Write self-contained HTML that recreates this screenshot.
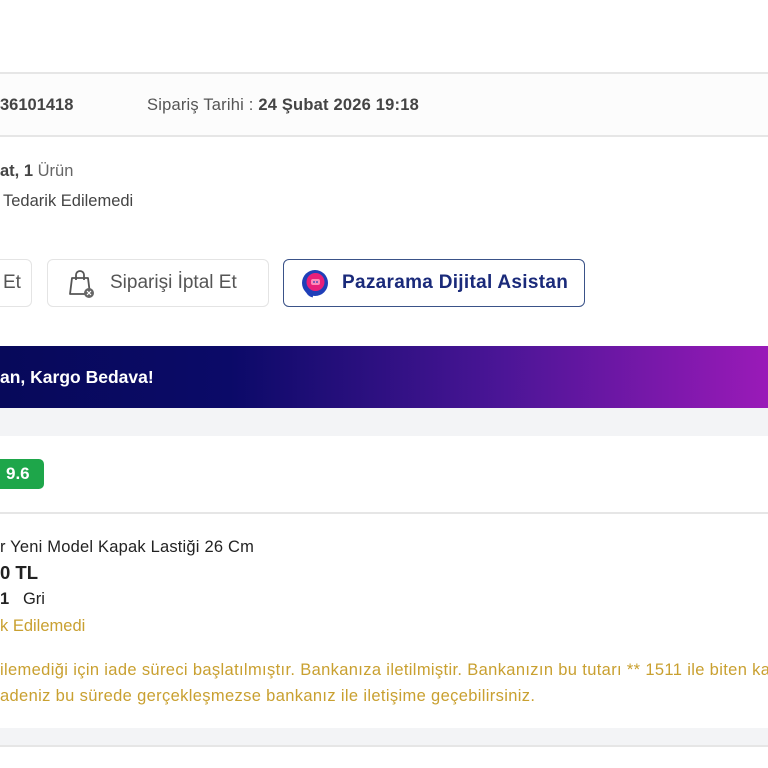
<!DOCTYPE html>
<html><head><meta charset="utf-8"><style>
*{margin:0;padding:0;box-sizing:border-box}
body{width:768px;height:768px;overflow:hidden;background:#fff;font-family:"Liberation Sans","DejaVu Sans",sans-serif;color:#333;position:relative}
.a{position:absolute;white-space:nowrap}
.line{position:absolute;left:0;width:768px;height:2px;background:#e6e6e6}
.btn{position:absolute;top:259px;height:48px;border:1px solid #e4e4e4;border-radius:6px;background:#fff;font-size:19px;color:#555;display:flex;align-items:center}
</style></head><body>
<div class="line" style="top:72px"></div>
<div class="a" style="left:0;top:74px;width:768px;height:61px;background:#fcfcfc"></div>
<div class="a" style="left:0;top:96px;font-size:16.5px;color:#444;font-weight:bold">36101418</div>
<div class="a" style="left:147px;top:96px;font-size:16.5px;color:#555;letter-spacing:0.2px">Sipariş Tarihi : <b style="color:#444">24 Şubat 2026 19:18</b></div>
<div class="line" style="top:135px"></div>
<div class="a" style="left:0;top:162px;font-size:16.5px;color:#666"><b style="color:#444">at, 1</b> Ürün</div>
<div class="a" style="left:3px;top:192px;font-size:16.5px;color:#444">Tedarik Edilemedi</div>
<div class="btn" style="left:-20px;width:52px;padding-left:22px">Et</div>
<div class="btn" style="left:47px;width:222px;padding-left:18px">
<svg width="30" height="30" viewBox="0 0 30 30" style="margin-right:14px"><path d="M4 26 L6 10 H22 L24 26 Z" fill="none" stroke="#555" stroke-width="1.8" stroke-linejoin="round"/><path d="M10 12 V7 a4 4 0 0 1 8 0 V12" fill="none" stroke="#555" stroke-width="1.8"/><circle cx="23" cy="25" r="5" fill="#666"/><path d="M21 23 l4 4 M25 23 l-4 4" stroke="#fff" stroke-width="1.2"/></svg>Siparişi İptal Et</div>
<div class="btn" style="left:283px;width:302px;border:1.5px solid #3a5288;padding-left:16px;color:#1a2a7a;font-weight:bold;letter-spacing:0.3px">
<svg width="30" height="30" viewBox="0 0 30 30" style="margin-right:12px"><circle cx="15" cy="15" r="13" fill="#1f3fb8"/><circle cx="15.5" cy="14" r="9" fill="#e8207a"/><path d="M7 22 Q8 27 13 28" stroke="#1f3fb8" stroke-width="3" fill="none"/><rect x="11" y="11" width="9" height="6" rx="2" fill="#ff8ab8"/><circle cx="14" cy="14" r="0.9" fill="#1f3fb8"/><circle cx="17" cy="14" r="0.9" fill="#1f3fb8"/></svg>Pazarama Dijital Asistan</div>
<div class="a" style="left:0;top:346px;width:768px;height:62px;background:linear-gradient(90deg,#07095a 0%,#0b0a68 30%,#4a1596 65%,#9a1ab8 100%)"></div>
<div class="a" style="left:0;top:367px;font-size:17.5px;color:#fff;font-weight:bold">an, Kargo Bedava!</div>
<div class="a" style="left:0;top:408px;width:768px;height:28px;background:#f3f4f6"></div>
<div class="a" style="left:-10px;top:459px;width:54px;height:30px;background:#1ea64a;border-radius:5px;color:#fff;font-weight:bold;font-size:17px;padding:5px 0 0 16px">9.6</div>
<div class="line" style="top:512px"></div>
<div class="a" style="left:0;top:538px;font-size:16.5px;color:#222;letter-spacing:0.2px">r Yeni Model Kapak Lastiği 26 Cm</div>
<div class="a" style="left:0;top:562px;font-size:18.5px;color:#222;font-weight:bold">0 TL</div>
<div class="a" style="left:0;top:590px;font-size:16.5px;color:#222"><b>1</b>&nbsp;&nbsp;&nbsp;Gri</div>
<div class="a" style="left:0;top:617px;font-size:16.5px;color:#c9a030">k Edilemedi</div>
<div class="a" style="left:0;top:661px;font-size:16.5px;color:#c9a030;letter-spacing:0.35px">ilemediği için iade süreci başlatılmıştır. Bankanıza iletilmiştir. Bankanızın bu tutarı ** 1511 ile biten ka</div>
<div class="a" style="left:0;top:687px;font-size:16.5px;color:#c9a030;letter-spacing:0.35px">adeniz bu sürede gerçekleşmezse bankanız ile iletişime geçebilirsiniz.</div>
<div class="a" style="left:0;top:728px;width:768px;height:18px;background:#f3f4f6"></div>
<div class="line" style="top:745px"></div>
</body></html>
